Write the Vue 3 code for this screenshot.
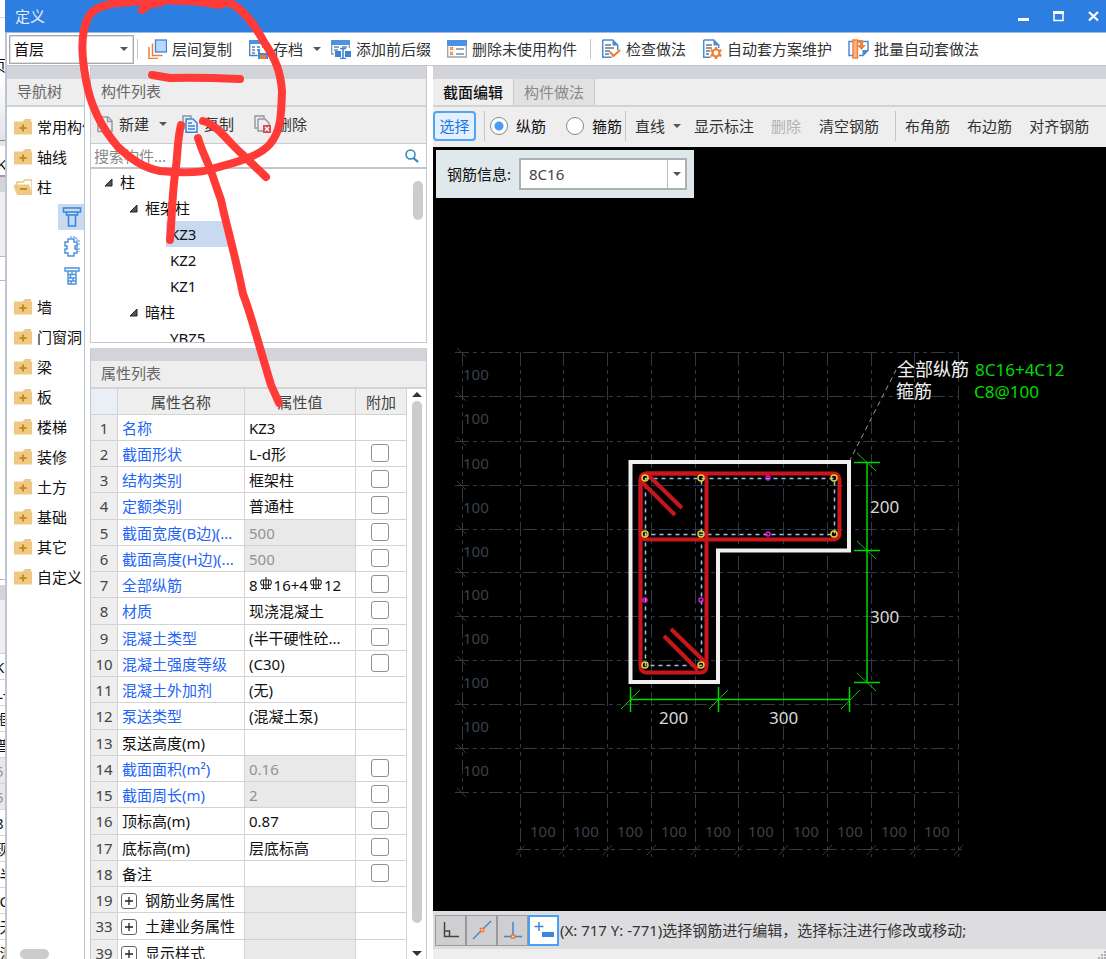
<script setup>
import { ref } from 'vue'

const navTop = ['常用构件', '轴线']
const navRest = ['墙', '门窗洞', '梁', '板', '楼梯', '装修', '土方', '基础', '其它', '自定义']

const tree = [
  { text: '柱', level: 0, open: true },
  { text: '框架柱', level: 1, open: true },
  { text: 'KZ3', level: 2, selected: true },
  { text: 'KZ2', level: 2 },
  { text: 'KZ1', level: 2 },
  { text: '暗柱', level: 1, open: true },
  { text: 'YBZ5', level: 2 }
]

const rows = [
  { n: 1, name: '名称', link: true, value: 'KZ3' },
  { n: 2, name: '截面形状', link: true, value: 'L-d形', check: true },
  { n: 3, name: '结构类别', link: true, value: '框架柱', check: true },
  { n: 4, name: '定额类别', link: true, value: '普通柱', check: true },
  { n: 5, name: '截面宽度(B边)(...', link: true, value: '500', off: true, check: true },
  { n: 6, name: '截面高度(H边)(...', link: true, value: '500', off: true, check: true },
  { n: 7, name: '全部纵筋', link: true, bars: ['8', '16+4', '12'], check: true },
  { n: 8, name: '材质', link: true, value: '现浇混凝土', check: true },
  { n: 9, name: '混凝土类型', link: true, value: '(半干硬性砼...', check: true },
  { n: 10, name: '混凝土强度等级', link: true, value: '(C30)', check: true },
  { n: 11, name: '混凝土外加剂', link: true, value: '(无)' },
  { n: 12, name: '泵送类型', link: true, value: '(混凝土泵)' },
  { n: 13, name: '泵送高度(m)', value: '' },
  { n: 14, name: '截面面积(m²)', link: true, value: '0.16', off: true, check: true },
  { n: 15, name: '截面周长(m)', link: true, value: '2', off: true, check: true },
  { n: 16, name: '顶标高(m)', value: '0.87', check: true },
  { n: 17, name: '底标高(m)', value: '层底标高', check: true },
  { n: 18, name: '备注', value: '', check: true },
  { n: 19, name: '钢筋业务属性', group: true, off: true, value: '' },
  { n: 33, name: '土建业务属性', group: true, off: true, value: '' },
  { n: 39, name: '显示样式', group: true, off: true, value: '' }
]

const behind = ['K', 'L-', '框', '普', '5', '5', '8', '现', '(半', '(C', '(无', '(混']

const barKind = ref('long')
const barInfo = ref('8C16')

const gridX = [521, 564, 608, 652, 696, 739, 784, 828, 872, 915, 959]
const gridY = [352, 396, 441, 485, 529, 572, 616, 660, 704, 748, 792]
const cornerBars = [[645, 478], [701, 478], [834, 478], [645, 534], [701, 534], [834, 534], [645, 665], [701, 665]]
const sideBars = [[768, 478], [768, 534], [645, 600], [701, 600]]
</script>

<template>
  <div class="screen">
    <div class="behind">
      <div class="b-top"></div>
      <div class="b-ribbon">页</div>
      <div class="b-field">K</div>
      <div class="b-band"></div>
      <div class="b-tools"></div>
      <div class="b-line"></div>
      <div class="b-list"></div>
      <div class="b-band b-band2"></div>
      <div class="b-head"></div>
      <div v-for="(t, i) in behind" :key="i" class="b-row" :class="{ off: t === '5' }">{{ t }}</div>
    </div>

    <div class="window">
      <header class="title">
        <span>定义</span>
        <div class="win-buttons">
          <button aria-label="最小化"><svg width="11" height="12"><path d="M0 9.5h11" stroke="#fff" stroke-width="3" /></svg></button>
          <button aria-label="最大化"><svg width="11" height="12"><path d="M1 2.5h9v8H1z" fill="none" stroke="#fff" stroke-width="1.5" /><path d="M0 2.5h11" stroke="#fff" stroke-width="3" /></svg></button>
          <button aria-label="关闭"><svg width="11" height="12"><path d="M1 2l9 8.500M10 2l-9 8.500" stroke="#fff" stroke-width="2.200" /></svg></button>
        </div>
      </header>

      <div class="toolbar">
        <label class="floor">
          <select aria-label="楼层"><option>首层</option></select>
          <i class="caret"></i>
        </label>
        <i class="sep first"></i>
        <button class="tool">
          <svg width="20" height="20"><rect x="8.500" y="1" width="11" height="12" fill="#b7d8ff" stroke="#3f86d6" stroke-width="1.300" /><path d="M5.500 4.500v12h10M2 8v11.500h9" fill="none" stroke="#e88240" stroke-width="1.500" /></svg>
          层间复制
        </button>
        <button class="tool">
          <svg width="20" height="20"><path d="M1 1h17v4H1z" fill="#4a92e4" /><path d="M1.700 4v12.500h8M17.300 4v5" fill="none" stroke="#4a7fc0" stroke-width="1.300" /><path d="M4 8h3M9 8h3M14 8h2M4 11h3M9 11h2M4 14h3" stroke="#577fae" stroke-width="1.400" /><path d="M10 10h10v10H10z" fill="#4389d9" /><path d="M12 10h6v4h-6z" fill="#fff" /><path d="M12 16h6v4h-6z" fill="#e87d38" /></svg>
          存档<i class="caret save"></i>
        </button>
        <button class="tool">
          <svg width="20" height="20"><path d="M0 1h19v5H0z" fill="#4a92e4" /><path d="M.7 5v10h2M18.300 5v4" fill="none" stroke="#7c97b5" stroke-width="1.300" /><path d="M3 8h5M11 8h5M3 11h4" stroke="#71879d" stroke-width="1.500" /><path d="M4 12h6v6H4zM14 12h6v6h-6z" fill="#3e82d1" /><path d="M9 9.500h6M12 9.500v10M9 19.500h6" fill="none" stroke="#3e82d1" stroke-width="1.500" /></svg>
          添加前后缀
        </button>
        <button class="tool">
          <svg width="20" height="20"><path d="M0 1h20v6H0z" fill="#4a92e4" /><path d="M.7 6v12h18.600V6" fill="none" stroke="#8fa6bc" stroke-width="1.300" /><path d="M3 8l3 3M6 8l-3 3M3 13l3 3M6 13l-3 3" stroke="#ef8a34" stroke-width="1.300" /><path d="M9 10h8M9 15h8" stroke="#7d8c9a" stroke-width="1.400" /></svg>
          删除未使用构件
        </button>
        <i class="sep mid"></i>
        <button class="tool">
          <svg width="20" height="20"><path d="M1.700 1h10l5 5v5M1.700 1v17.300h9" fill="none" stroke="#4a8bd6" stroke-width="1.500" /><path d="M11.500.5l6 6h-6z" fill="#4a8bd6" /><path d="M4 6h6M4 9h9M4 12h5M4 15h4" stroke="#687788" stroke-width="1.300" /><path d="M9 13l3.500 4L19 11" fill="none" stroke="#f17e30" stroke-width="2.200" /></svg>
          检查做法
        </button>
        <button class="tool">
          <svg width="20" height="20"><path d="M1.700 1h10l5 5v3M1.700 1v17.300h7" fill="none" stroke="#4a8bd6" stroke-width="1.500" /><path d="M11.500.5l6 6h-6z" fill="#4a8bd6" /><path d="M4 6h6M4 9h6M4 12h4M4 15h3" stroke="#687788" stroke-width="1.300" /><circle cx="14" cy="14" r="3.500" fill="#fff" stroke="#f17e30" stroke-width="2.200" /><path d="M14 8v2.500M14 17.500V20M8.700 11l2.200 1.200M17.100 15.800l2.200 1.200M8.700 17l2.200-1.200M17.100 12.200l2.200-1.200" stroke="#f17e30" stroke-width="2.400" /></svg>
          自动套方案维护
        </button>
        <button class="tool">
          <svg width="21" height="20"><path d="M5 2.500H1v14h4M11 2.500h9v9l-5 5h-4" fill="none" stroke="#4a8bd6" stroke-width="1.500" /><path d="M20.500 11l-6 6v-6z" fill="#4a8bd6" /><path d="M9.500 1H5v18h4.500V1z" fill="#f6b58a" stroke="#ee8240" stroke-width="1.500" /><path d="M10 1h5v5h3l-4.500 5L9 6h3V4h-2z" fill="#ee8240" /></svg>
          批量自动套做法
        </button>
      </div>

      <main class="body">
        <nav class="nav">
          <div class="band"></div>
          <h2 class="head">导航树</h2>
          <div class="nav-list">
            <a v-for="t in navTop" :key="t" href="#" class="nav-item">
              <svg width="18" height="18"><path d="M9 3l2-2h6v3H9z" fill="#e9c98f" /><path d="M0 3.500h18V16.500H0z" fill="#efc981" /><path d="M9 6.500v7M5.500 10h7" stroke="#c58b22" stroke-width="2" /></svg>{{ t }}
            </a>
            <a href="#" class="nav-item">
              <svg width="20" height="18"><path d="M3 7V4h6l2-2h7v13" fill="#fff" stroke="#edc67e" stroke-width="1.500" /><path d="M-1 6.500h16l4 10.500H3z" fill="#efc981" /><path d="M6 11h7" stroke="#c58b22" stroke-width="2" /></svg>柱
            </a>
            <a href="#" class="nav-sub active" aria-label="柱">
              <svg width="20" height="22"><g fill="none" stroke="#3587dc" stroke-width="1.600"><path d="M1.500 2h17v4h-17zM4.500 6v3h11V6M6.500 9v11h7V9" /></g></svg>
            </a>
            <a href="#" class="nav-sub" aria-label="构造柱">
              <svg width="20" height="22"><g fill="none" stroke="#4b91dc" stroke-width="1.500"><path d="M6 3h6v3h3v4h-2v3h2v4h-3v3H6v-3H3v-4h2v-3H3V6h3z" /><path d="M8 1h6v3h3v5h-2v3h2v4" stroke-dasharray="2 1" stroke-width="1" /></g></svg>
            </a>
            <a href="#" class="nav-sub" aria-label="砌体柱">
              <svg width="20" height="22"><g fill="none" stroke="#4b91dc" stroke-width="1.400"><path d="M3 3h14v3H3zM6 6v13h8V6M6 9.500h8M6 13h8M6 16h8M10 6v3.500M8.500 9.500V13M11 13v3M9 16v3" /></g></svg>
            </a>
            <a v-for="t in navRest" :key="t" href="#" class="nav-item">
              <svg width="18" height="18"><path d="M9 3l2-2h6v3H9z" fill="#e9c98f" /><path d="M0 3.500h18V16.500H0z" fill="#efc981" /><path d="M9 6.500v7M5.500 10h7" stroke="#c58b22" stroke-width="2" /></svg>{{ t }}
            </a>
          </div>
          <div class="nav-scroll"></div>
        </nav>

        <div class="middle">
          <section class="parts">
            <div class="band"></div>
            <h2 class="head">构件列表</h2>
            <div class="parts-tools">
              <button class="tool">
                <svg width="18" height="18"><path d="M5 2h7l4 4v10.500H2V9" fill="none" stroke="#929ba5" stroke-width="1.500" /><path d="M11.500 2v4.500H16" fill="none" stroke="#929ba5" stroke-width="1.300" /><path d="M3 0v7M0 3.500h6M1 1.500l4 4M5 1.500l-4 4" stroke="#f0a03a" stroke-width="1.200" /></svg>
                新建<i class="caret"></i>
              </button>
              <button class="tool copy">
                <svg width="18" height="18"><path d="M4 13H2V1h8v2" fill="none" stroke="#8795a5" stroke-width="1.400" /><path d="M5 4h7l4 4v9.300H5z" fill="#e5f1ff" stroke="#3b83d4" stroke-width="1.500" /><path d="M7 8h4M7 11h7M7 14h7" stroke="#3b83d4" stroke-width="1.300" /></svg>
                复制
              </button>
              <button class="tool remove">
                <svg width="18" height="18"><path d="M3 13H1V1h9v2" fill="none" stroke="#8f979f" stroke-width="1.400" /><path d="M4 4h7l4 4v2M4 4v12h5" fill="none" stroke="#8f979f" stroke-width="1.400" /><path d="M9 10h8v8H9z" fill="#d94a52" /><path d="M11 12l4 4M15 12l-4 4" stroke="#fff" stroke-width="1.300" /></svg>
                删除
              </button>
            </div>
            <label class="search">
              <input type="text" placeholder="搜索构件..." aria-label="搜索构件" />
              <svg width="14" height="14"><circle cx="5.500" cy="5.500" r="4.500" fill="none" stroke="#2c87bd" stroke-width="1.500" /><path d="M8.500 9l4.500 4" stroke="#2c87bd" stroke-width="2.200" /></svg>
            </label>
            <div class="tree">
              <div class="tree-rows">
                <div v-for="r in tree" :key="r.text" class="tree-row" :class="'lv' + r.level">
                  <svg v-if="r.open" width="9" height="9"><path d="M8 1v7H1z" fill="#555" stroke="#222" /></svg>
                  <span :class="{ selected: r.selected }">{{ r.text }}</span>
                </div>
              </div>
              <div class="tree-scroll"></div>
            </div>
          </section>

          <section class="props">
            <div class="band"></div>
            <h2 class="head">属性列表</h2>
            <div class="props-body">
              <table>
                <colgroup><col class="c-no" /><col class="c-name" /><col /><col class="c-add" /></colgroup>
                <thead>
                  <tr><th class="corner"></th><th>属性名称</th><th>属性值</th><th>附加</th></tr>
                </thead>
                <tbody>
                  <tr v-for="r in rows" :key="r.n">
                    <th scope="row">{{ r.n }}</th>
                    <td :class="{ link: r.link }">
                      <button v-if="r.group" class="expand" :aria-label="'展开' + r.name"><svg width="8" height="8"><path d="M4 0v8M0 4h8" stroke="#222" stroke-width="1.300" /></svg></button>{{ r.name }}
                    </td>
                    <td :class="{ off: r.off }">
                      <template v-if="r.bars">{{ r.bars[0] }}<svg class="bar" width="14" height="14"><path d="M7 0v13M4.500 2.500v9M9.500 2.500v9M2 11.500h10M3 3h8a3 3 0 0 1 0 5H3a3 3 0 0 1 0-5" fill="none" stroke="#222" stroke-width="1.100" /></svg>{{ r.bars[1] }}<svg class="bar" width="14" height="14"><path d="M7 0v13M4.500 2.500v9M9.500 2.500v9M2 11.500h10M3 3h8a3 3 0 0 1 0 5H3a3 3 0 0 1 0-5" fill="none" stroke="#222" stroke-width="1.100" /></svg>{{ r.bars[2] }}</template>
                      <template v-else>{{ r.value }}</template>
                    </td>
                    <td class="add"><input v-if="r.check" type="checkbox" :aria-label="'附加' + r.name" /></td>
                  </tr>
                </tbody>
              </table>
              <div class="props-scroll">
                <svg width="10" height="5"><path d="M0 5l5-5 5 5z" fill="#333" /></svg>
                <i></i>
                <svg width="10" height="5"><path d="M0 0l5 5 5-5z" fill="#333" /></svg>
              </div>
            </div>
          </section>
        </div>

        <section class="editor">
          <div class="band"></div>
          <div class="tabs" role="tablist">
            <button role="tab" aria-selected="true" class="on">截面编辑</button>
            <button role="tab" aria-selected="false">构件做法</button>
          </div>
          <div class="editor-tools">
            <button class="pick">选择</button>
            <i class="sep s1"></i>
            <label class="radio"><input v-model="barKind" type="radio" name="kind" value="long" />纵筋</label>
            <label class="radio"><input v-model="barKind" type="radio" name="kind" value="hoop" />箍筋</label>
            <i class="sep s2"></i>
            <button class="line">直线<i class="caret"></i></button>
            <button>显示标注</button>
            <button disabled>删除</button>
            <button class="clear">清空钢筋</button>
            <i class="sep s3"></i>
            <button>布角筋</button>
            <button>布边筋</button>
            <button>对齐钢筋</button>
          </div>

          <div class="canvas">
            <svg class="drawing" role="img" aria-label="L形柱截面配筋图">
              <g transform="translate(-433 -147)">
                <g class="grid">
                  <path v-for="y in gridY" :key="'h' + y" :d="`M455 ${y}.5H959`" />
                  <path v-for="x in gridX" :key="'v' + x" :d="`M${x - 1}.5 352V857`" />
                  <path d="M462.500 352V792M517 849.500H962" />
                </g>
                <g class="ticks">
                  <path v-for="y in gridY" :key="'a' + y" :d="`M457 ${y - 4}l9 9`" />
                  <path v-for="x in gridX" :key="'b' + x" :d="`M${x - 5} 855l9-10`" />
                </g>
                <g class="grid-text">
                  <text v-for="y in gridY.slice(0, 10)" :key="'c' + y" x="463" :y="y + 28">100</text>
                  <text v-for="x in gridX.slice(0, 10)" :key="'d' + x" :x="x + 9" y="837">100</text>
                </g>
                <path d="M849 462L896 370" stroke="#9a9a9a" stroke-dasharray="5 4" />
                <path class="outline" d="M630.500 462H849V550.500H718V682H630.500z" />
                <g class="inner">
                  <path d="M645.500 478.500H834.500V534.500H645.500zM645.500 534.500V665.500H701.500V478.500" />
                </g>
                <g class="hoop">
                  <rect x="640.500" y="473.500" width="199" height="66" rx="6" />
                  <rect x="640.500" y="473.500" width="66" height="199" rx="6" />
                  <path d="M648 475l34 33M642 482l33 33M664 636l34 34M671 629l35 34" />
                </g>
                <circle v-for="(p, i) in cornerBars" :key="'e' + i" :cx="p[0]" :cy="p[1]" r="3" fill="none" stroke="#e6cf2e" stroke-width="1.500" />
                <circle v-for="(p, i) in sideBars" :key="'f' + i" :cx="p[0]" :cy="p[1]" r="2" fill="none" stroke="#e414e4" stroke-width="1.500" />
                <g class="dims">
                  <path d="M867 462V682M854 462.500H880M854 550.500H880M854 682.500H880M630 699.500H849M630.500 687V712M718.500 687V712M849.500 687V712" />
                  <path class="thin" d="M857 453l19 18M857 541l19 18M857 673l19 18M621 709l19-19M709 709l19-19M841 709l19-19" />
                </g>
                <g class="dim-text">
                  <text x="870" y="513">200</text>
                  <text x="870" y="623">300</text>
                  <text x="659" y="724">200</text>
                  <text x="769" y="724">300</text>
                </g>
                <g class="note">
                  <text x="897" y="376">全部纵筋</text>
                  <text x="896" y="398">箍筋</text>
                </g>
                <g class="note-value">
                  <text x="975" y="376">8C16+4C12</text>
                  <text x="974" y="398">C8@100</text>
                </g>
              </g>
            </svg>
            <div class="info">
              <label for="bar-info">钢筋信息:</label>
              <div class="combo">
                <input id="bar-info" v-model="barInfo" type="text" />
                <button aria-label="展开"><i class="caret"></i></button>
              </div>
            </div>
          </div>

          <footer class="status">
            <button aria-label="正交"><svg width="20" height="20"><path d="M3.500 2v14.500H18M3.500 11h5v5.500" fill="none" stroke="#444" stroke-width="1.500" /></svg></button>
            <button aria-label="端点"><svg width="20" height="20"><path d="M1 19L19 1" stroke="#3f86d8" stroke-width="1.500" /><rect x="8.500" y="8.500" width="3" height="3" fill="#fff" stroke="#ee7a2c" stroke-width="1.500" /></svg></button>
            <button aria-label="垂足"><svg width="20" height="20"><path d="M10 2v15M1 16.500h18" stroke="#3f86d8" stroke-width="1.500" /><rect x="8.500" y="15" width="3" height="3" fill="#fff" stroke="#ee7a2c" stroke-width="1.500" /></svg></button>
            <button class="on" aria-label="动态输入"><svg width="22" height="20"><path d="M6 2v9M1.500 6.500h9" stroke="#3f86d8" stroke-width="1.500" /><path d="M9 12h12v5H9z" fill="#3f86d8" /></svg></button>
            <span>(X: 717 Y: -771)选择钢筋进行编辑，选择标注进行修改或移动;</span>
          </footer>
          <div class="foot"><svg width="9" height="9"><path d="M7 1h2v2H7zM7 4h2v2H7zM4 4h2v2H4zM7 7h2v2H7zM4 7h2v2H4zM1 7h2v2H1z" fill="#b0b0b4" /></svg></div>
        </section>
      </main>
    </div>

    <svg class="ink" aria-hidden="true">
      <path d="M142 10C148 4 153 3 160 3M220 5C190 -1 150 0 118 3C100 5 90 11 87 20C80 38 82 58 86 80C90 104 100 126 118 147C132 160 144 168 160 171C180 173 200 173 212 169C232 163 258 158 270 144C282 130 281 112 282 92C281 72 275 58 264 42C254 24 244 10 230 3L215 3" />
      <path d="M152 75L170 78C194 77 218 78 240 79" />
      <path d="M181 125C177 140 178 156 175 174C172 196 172 218 170 240" />
      <path d="M203 121C218 125 228 142 242 154L266 177" />
      <path d="M198 138C202 152 210 166 214 180L221 200C226 224 234 250 243 294C250 312 254 328 260 348L271 385L279 403" />
    </svg>
  </div>
</template>

<style>
body {
  margin: 0;
}
</style>

<style scoped>
* {
  box-sizing: border-box;
}
.screen {
  position: relative;
  display: flex;
  height: 100vh;
  overflow: hidden;
  background: #fff;
  color: #111;
  font: 15px/20px "Noto Sans", "Noto Sans CJK SC", sans-serif;
}
button,
input,
select {
  font: inherit;
  color: inherit;
  margin: 0;
  padding: 0;
  border: 0;
  background: none;
  white-space: nowrap;
}
a {
  color: inherit;
  text-decoration: none;
}
svg {
  flex: none;
  display: block;
}
.caret {
  flex: none;
  border: 4px solid transparent;
  border-top-color: #555;
  border-bottom: 0;
}
.sep {
  flex: none;
  width: 1px;
  background: #c4c5c9;
}

/* sliver of the window underneath */
.behind {
  flex: none;
  width: 5px;
  overflow: hidden;
  white-space: nowrap;
}
.b-top { height: 18px; border-bottom: 1px solid #d5d8de; }
.b-ribbon { height: 123px; padding-top: 37px; text-indent: -9px; background: linear-gradient(#fff 50%, #dfe3e8); border-bottom: 1px solid #888; }
.b-field { height: 36px; padding-top: 8px; text-indent: -3px; border-top: 5px solid #e4e6ea; border-bottom: 2px solid #9a9da3; }
.b-band { height: 15px; background: #d3d4da; }
.b-tools { height: 65px; background: #eee; border-bottom: 1px solid #bbb; }
.b-line { height: 24px; border-bottom: 1px solid #bbb; }
.b-list { height: 299px; border-bottom: 1px solid #bbb; }
.b-band2 { margin-top: 5px; }
.b-head { height: 54px; background: #eee; border-bottom: 1px solid #d0d0d0; }
.b-row { height: 26px; padding-top: 3px; text-indent: -5px; border-bottom: 1px solid #d4d4d4; }
.b-row.off { background: #e8e8e8; color: #999; }

.window {
  flex: 1;
  min-width: 0;
  display: flex;
  flex-direction: column;
  border-left: 2px solid #bfc4d2;
}
.title {
  flex: none;
  display: flex;
  align-items: center;
  justify-content: space-between;
  height: 33px;
  margin-left: -2px;
  padding: 0 7px 0 10px;
  background: #2c7ee0;
  border-bottom: 1px solid #9dbbe0;
  color: #e2edfb;
}
.win-buttons {
  display: flex;
  gap: 24px;
}
.toolbar {
  flex: none;
  display: flex;
  align-items: center;
  gap: 16px;
  height: 33px;
  border-bottom: 1px solid #c5c6cc;
}
.floor {
  display: flex;
  align-items: center;
  width: 125px;
  height: 29px;
  margin-left: 2px;
  padding: 0 5px 0 4px;
  border: 1px solid #a9a9a9;
  outline: 1px solid #dedede;
  outline-offset: -2px;
}
.floor select {
  flex: 1;
  min-width: 0;
  appearance: none;
}
.sep.first {
  height: 20px;
  margin: 0 -7px 0 -13px;
}
.sep.mid {
  height: 20px;
  margin: 0 -6px 0 -3px;
}
.tool {
  display: flex;
  align-items: center;
  gap: 5px;
  color: #333;
}
.caret.save {
  margin: 0 -6px 0 5px;
}

.body {
  flex: 1;
  min-height: 0;
  display: flex;
}
.band {
  flex: none;
  height: 13px;
  background: #d3d4da;
}
.head {
  flex: none;
  height: 28px;
  margin: 0;
  padding: 2px 10px;
  background: #eee;
  border-bottom: 2px solid #d2d3d6;
  color: #666;
  font-size: 15px;
  font-weight: 400;
}
.nav {
  flex: none;
  display: flex;
  flex-direction: column;
  width: 78px;
  border-right: 1px solid #bfc4cc;
}
.nav-list {
  flex: 1;
  min-height: 0;
  padding-top: 5px;
  overflow: hidden;
}
.nav-item {
  display: flex;
  align-items: center;
  height: 30px;
  padding: 0 0 1px 7px;
  gap: 5px;
  white-space: nowrap;
}
.nav-item svg {
  width: 18px;
}
.nav-sub {
  display: flex;
  align-items: center;
  justify-content: center;
  height: 26px;
  margin: 2px 0 4px 51px;
  padding-left: 2px;
}
.nav-sub + .nav-sub {
  margin-bottom: 3px;
}
.nav-sub + .nav-sub,
.nav-sub + .nav-item {
  margin-top: 0;
}
.nav-scroll {
  flex: none;
  width: 29px;
  height: 10px;
  margin-left: 13px;
  border-radius: 5px;
  background: #ccc;
}
.nav-sub.active {
  background: #c9d9ef;
}

.middle {
  flex: none;
  display: flex;
  flex-direction: column;
  gap: 5px;
  width: 337px;
  margin: 0 6px 0 5px;
}
.parts {
  flex: none;
  border: solid #c6c8ce;
  border-width: 0 1px 1px;
}
.parts-tools {
  display: flex;
  align-items: center;
  height: 37px;
  padding: 0 0 2px 5px;
  background: #eee;
  border-bottom: 1px solid #c9cacd;
}
.parts-tools .caret {
  margin-left: 5px;
}
.copy {
  margin-left: 14px;
}
.remove {
  margin-left: 20px;
}
.search {
  display: flex;
  align-items: center;
  height: 25px;
  padding: 0 7px 0 3px;
  border-bottom: 2px solid #c2c4c8;
}
.search input {
  flex: 1;
  min-width: 0;
}
.search input::placeholder {
  color: #888;
  opacity: 1;
}
.tree {
  display: flex;
  justify-content: space-between;
  height: 173px;
  overflow: hidden;
}
.tree-row {
  display: flex;
  align-items: center;
  gap: 3px;
  height: 26px;
}
.tree-row span {
  padding: 3px 4px;
}
.lv0 { padding-left: 13px; }
.lv1 { padding-left: 38px; }
.lv2 { padding-left: 75px; }
.tree-row .selected {
  width: 62px;
  background: #c9d9ef;
}
.tree-scroll {
  width: 10px;
  height: 39px;
  margin: 12px 3px;
  border-radius: 5px;
  background: #ccc;
}

.props {
  flex: 1;
  min-height: 0;
  display: flex;
  flex-direction: column;
  border: solid #c6c8ce;
  border-width: 0 1px;
}
.props-body {
  flex: 1;
  min-height: 0;
  display: flex;
  overflow: hidden;
}
table {
  flex: 1;
  align-self: flex-start;
  table-layout: fixed;
  width: 0;
  border-collapse: separate;
  border-spacing: 0;
}
.c-no { width: 27px; }
.c-name { width: 127px; }
.c-add { width: 51px; }
th,
td {
  height: 26px;
  padding: 0 4px;
  border: solid #d3d3d3;
  border-width: 0 1px 1px 0;
  font-weight: 400;
  text-align: left;
  white-space: nowrap;
  overflow: hidden;
}
tbody tr:nth-child(4n) > * {
  height: 27px;
}
th {
  padding: 0;
  background: #eee;
  color: #444;
  text-align: center;
}
.corner {
  background: #eaeff6;
}
.link {
  color: #2464f4;
}
.off {
  background: #e9e9e9;
  color: #929292;
}
.add {
  padding: 0;
  text-align: center;
}
.add input {
  appearance: none;
  display: block;
  width: 18px;
  height: 18px;
  margin: 0 auto 2px 15px;
  border: 1px solid #8f8f8f;
  border-radius: 3px;
  background: #fff;
}
.expand {
  display: inline-flex;
  align-items: center;
  justify-content: center;
  width: 16px;
  height: 16px;
  margin: 0 8px 0 -1px;
  border: 1px solid #666;
  border-radius: 3px;
  vertical-align: 1px;
}
.expand svg {
  margin: 3px 0;
}
.bar {
  display: inline-block;
  margin: 0 1px;
}
.props-scroll {
  flex: none;
  display: flex;
  flex-direction: column;
  align-items: center;
  gap: 4px;
  width: 19px;
  padding: 3px 0;
}
.props-scroll i {
  flex: 1;
  width: 10px;
  margin-bottom: 24px;
  border-radius: 5px;
  background: #ccc;
}

.editor {
  flex: 1;
  min-width: 0;
  display: flex;
  flex-direction: column;
}
.tabs {
  flex: none;
  display: flex;
  height: 28px;
  background: #eee;
  border-bottom: 2px solid #d2d3d6;
}
.tabs button {
  padding: 0 10px;
  background: #e1e1e1;
  border-right: 1px solid #c6c7ca;
  color: #888;
}
.tabs .on {
  background: #eee;
  color: #111;
  font-weight: 500;
}
.editor-tools {
  flex: none;
  display: flex;
  align-items: center;
  gap: 17px;
  height: 40px;
  padding-bottom: 2px;
  background: #eee;
  color: #333;
}
.editor-tools button:disabled {
  color: #b2b2b2;
}
.editor-tools .pick {
  width: 43px;
  height: 30px;
  border: 2px solid #55a4f3;
  border-radius: 4px;
  background: #e4f0fd;
  color: #1877e2;
}
.editor-tools .sep {
  height: 30px;
}
.s1 { margin: 0 -12px 0 -9px; }
.s2 { margin: 0 -8px 0 -14px; }
.s3 { margin: 0 -8px 0 -2px; }
.clear {
  margin: 0 1px;
}
.radio {
  display: flex;
  align-items: center;
  gap: 8px;
  color: #111;
  white-space: nowrap;
}
.radio + .radio {
  margin-left: 3px;
}
.radio input {
  appearance: none;
  width: 18px;
  height: 18px;
  border: 1px solid #888;
  border-radius: 50%;
  background: #fff;
}
.radio input:checked {
  background: radial-gradient(circle, #4a9bf4 4px, #fff 5px);
}
.line {
  display: flex;
  align-items: center;
  gap: 8px;
  margin-right: -4px;
}

.canvas {
  position: relative;
  flex: 1;
  min-height: 0;
  background: #000;
  overflow: hidden;
}
.drawing {
  position: absolute;
  inset: 0;
  width: 100%;
  height: 100%;
}
.info {
  position: absolute;
  left: 3px;
  top: 3px;
  display: flex;
  align-items: center;
  gap: 8px;
  height: 48px;
  padding: 0 7px 0 11px;
  background: #dfe8ea;
}
.combo {
  display: flex;
  width: 168px;
  height: 32px;
  border: 2px solid #adb0b1;
  background: #fff;
  color: #444;
}
.combo input {
  flex: 1;
  min-width: 0;
  padding-left: 8px;
}
.combo button {
  display: flex;
  align-items: center;
  justify-content: center;
  width: 18px;
  border-left: 1px solid #bbb;
}
.grid path,
.ticks path {
  fill: none;
  stroke: #303a46;
}
.grid path {
  stroke-dasharray: 14 4 4 4 4 4;
}
.grid-text {
  fill: #3a424c;
  font-size: 15px;
}
.outline {
  fill: none;
  stroke: #f0f0f0;
  stroke-width: 4;
}
.inner path {
  fill: none;
  stroke: #9cc4ea;
  stroke-width: 1.5;
  stroke-dasharray: 4 4;
}
.hoop > * {
  fill: none;
  stroke: #c9161d;
  stroke-width: 4;
}
.dims path {
  fill: none;
  stroke: #00d800;
  stroke-width: 1.5;
}
.dims .thin {
  stroke: #00c800;
  stroke-width: 1;
}
.dim-text {
  fill: #d8d8d8;
  font-size: 17px;
}
.note {
  fill: #f2f2f2;
  font-size: 18px;
}
.note-value {
  fill: #00dc00;
  font-size: 17px;
}

.status {
  flex: none;
  display: flex;
  align-items: center;
  height: 38px;
  padding-left: 2px;
  background: #dddddf;
  color: #333;
  white-space: nowrap;
}
.status button {
  display: flex;
  align-items: center;
  justify-content: center;
  width: 31px;
  height: 31px;
  border: 1px solid #9a9a9c;
  background: #cfcfd1;
}
.status .on {
  border: 2px solid #4aa0f2;
  background: #fff;
}
.status span {
  padding-left: 1px;
}
.foot {
  flex: none;
  display: flex;
  justify-content: flex-end;
  align-items: flex-end;
  height: 10px;
  background: #eee;
}

/* hand-drawn markup above the whole window */
.ink {
  position: absolute;
  inset: 0;
  width: 100%;
  height: 100%;
  pointer-events: none;
}
.ink path {
  fill: none;
  stroke: #ff3a37;
  stroke-width: 8;
  stroke-linecap: round;
  stroke-linejoin: round;
}
</style>
